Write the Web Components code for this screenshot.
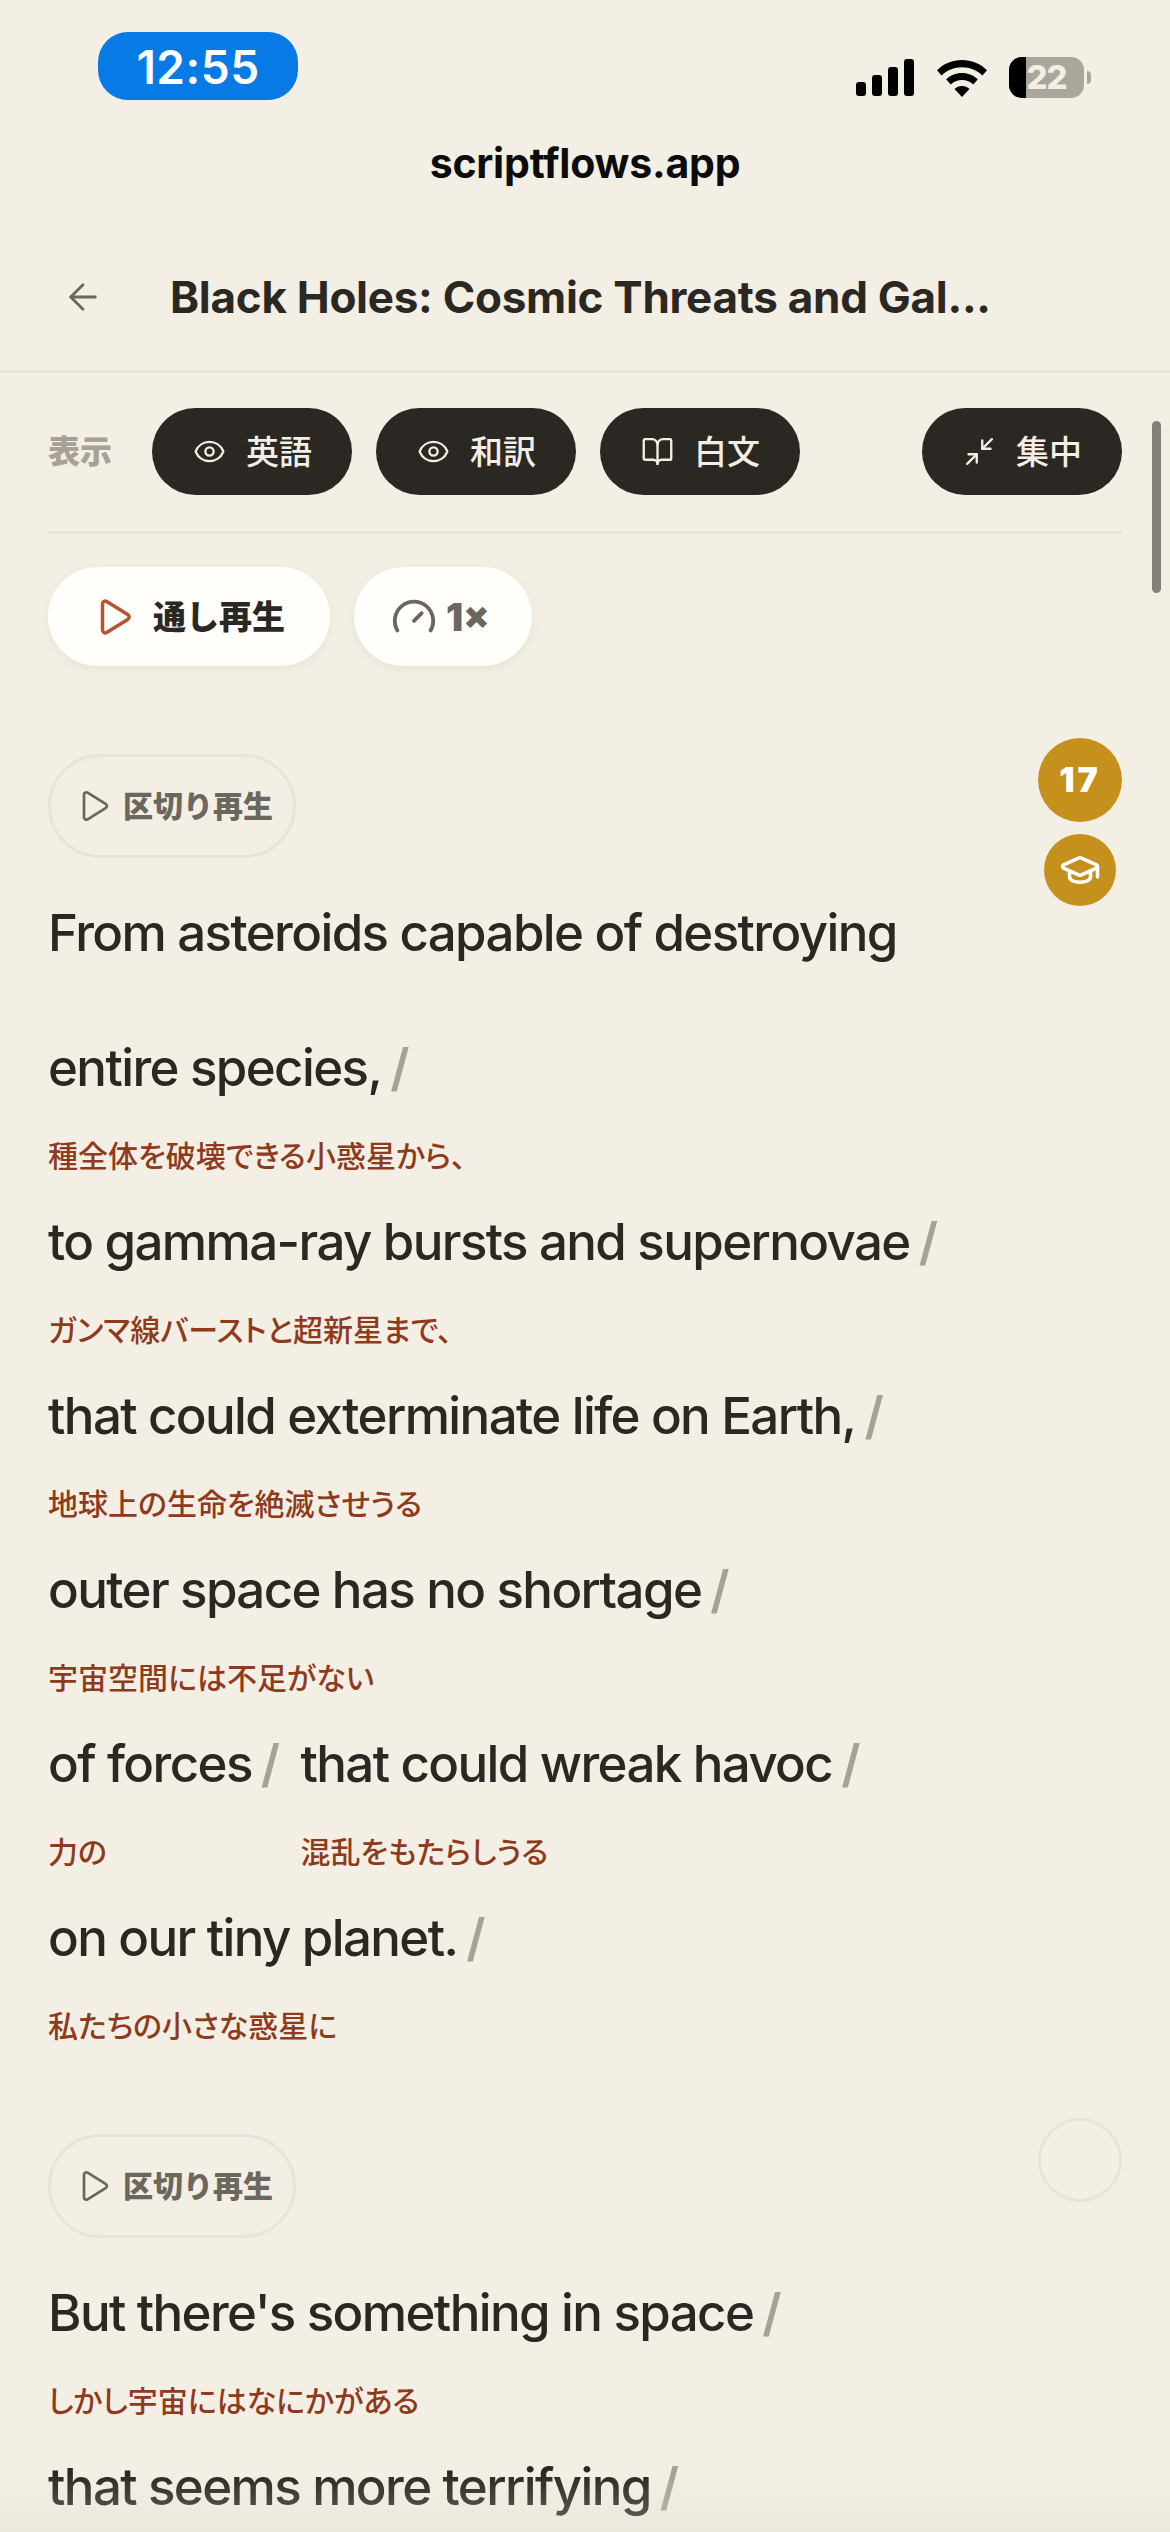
<!DOCTYPE html>
<html lang="ja">
<head>
<meta charset="utf-8">
<title>scriptflows</title>
<style>
  html, body { margin: 0; padding: 0; height: 2532px; overflow: hidden; background: #f3efe4; }
  body { position: relative; font-family: Inter, "Noto Sans CJK JP", sans-serif; color: #2b2824; }
</style>
</head>
<body>
<status-bar time="12:55" level="22"></status-bar>
<url-bar>scriptflows.app</url-bar>
<title-bar>Black Holes: Cosmic Threats and Gal...</title-bar>

<display-bar>
  <toggle-chip icon="eye">英語</toggle-chip>
  <toggle-chip icon="eye">和訳</toggle-chip>
  <toggle-chip icon="book">白文</toggle-chip>
  <toggle-chip icon="min" slot="end">集中</toggle-chip>
</display-bar>

<play-bar></play-bar>

<sentence-block count="17" active>
  <phrase-seg>From asteroids capable of destroying<br>entire species,<span slot="ja">種全体を破壊できる小惑星から、</span></phrase-seg>
  <phrase-seg>to gamma-ray bursts and supernovae<span slot="ja">ガンマ線バーストと超新星まで、</span></phrase-seg>
  <phrase-seg>that could exterminate life on Earth,<span slot="ja">地球上の生命を絶滅させうる</span></phrase-seg>
  <phrase-seg>outer space has no shortage<span slot="ja">宇宙空間には不足がない</span></phrase-seg>
  <phrase-seg>of forces<span slot="ja">力の</span></phrase-seg>
  <phrase-seg>that could wreak havoc<span slot="ja">混乱をもたらしうる</span></phrase-seg>
  <phrase-seg>on our tiny planet.<span slot="ja">私たちの小さな惑星に</span></phrase-seg>
</sentence-block>

<sentence-block>
  <phrase-seg>But there's something in space<span slot="ja">しかし宇宙にはなにかがある</span></phrase-seg>
  <phrase-seg>that seems more terrifying</phrase-seg>
</sentence-block>

<scroll-thumb></scroll-thumb>
<bottom-fade></bottom-fade>

<script>
// iconos de trazo, todos en caja de 24
const ICONS = {
  eye: '<path d="M2.06 12.35a1 1 0 0 1 0-.7 10.75 10.75 0 0 1 19.88 0 1 1 0 0 1 0 .7 10.75 10.75 0 0 1-19.88 0"/><circle cx="12" cy="12" r="3"/>',
  book: '<path d="M12 7v14"/><path d="M3 18a1 1 0 0 1-1-1V4a1 1 0 0 1 1-1h5a4 4 0 0 1 4 4 4 4 0 0 1 4-4h5a1 1 0 0 1 1 1v13a1 1 0 0 1-1 1h-6a3 3 0 0 0-3 3 3 3 0 0 0-3-3z"/>',
  min: '<path d="m14 10 7-7"/><path d="M20 10h-6V4"/><path d="m3 21 7-7"/><path d="M4 14h6v6"/>',
  play: '<path d="M6 4.5a1.6 1.6 0 0 1 2.4-1.4l12 7.5a1.6 1.6 0 0 1 0 2.8l-12 7.5A1.6 1.6 0 0 1 6 19.5z"/>',
  gauge: '<path d="m12 14 4-4"/><path d="M3.34 19a10 10 0 1 1 17.32 0"/>',
  cap: '<path d="M21.42 10.92a1 1 0 0 0-.02-1.84L12.83 5.18a2 2 0 0 0-1.66 0L2.6 9.08a1 1 0 0 0 0 1.83l8.57 3.91a2 2 0 0 0 1.66 0z"/><path d="M22 10v6"/><path d="M6 12.5V16a6 3 0 0 0 12 0v-3.5"/>',
  back: '<path d="m12 19-7-7 7-7"/><path d="M19 12H5"/>'
};

const icon = (name, size, sw) =>
  `<svg width="${size}" height="${size}" viewBox="0 0 24 24" fill="none" stroke="currentColor" stroke-width="${sw}" stroke-linecap="round" stroke-linejoin="round" style="display:block;flex:none">${ICONS[name]}</svg>`;

const JP = 'Inter, "Noto Sans CJK JP", sans-serif';

// base: shadow abierto + render()
class Base extends HTMLElement {
  constructor() {
    super();
    this.attachShadow({ mode: "open" });
  }
  connectedCallback() {
    this.shadowRoot.innerHTML = this.render();
  }
}

class StatusBar extends Base {
  render() {
    return `
    <style>
      :host { display: flex; justify-content: space-between; height: 110px; box-sizing: border-box; padding: 32px 79px 0 98px; }
      .time { width: 200px; height: 68px; border-radius: 30px; background: #077ae6; color: #fff; font: 600 46px/70px Inter, sans-serif; text-align: center; letter-spacing: .5px; }
      .right { display: flex; align-items: flex-start; padding-top: 25px; }
      .wifi { margin-left: 23px; margin-top: 3px; }
      .batt { position: relative; width: 75px; height: 41px; margin-left: 22px; border-radius: 13px; overflow: hidden; background: #aba69c; color: #f3efe4; font: 800 33px/41px Inter, sans-serif; text-align: center; }
      .batt i { position: absolute; left: 0; top: 0; bottom: 0; width: 17px; background: #000; }
      .batt span { position: relative; letter-spacing: -1px; }
      .nub { width: 4px; height: 13px; margin: 14px 0 0 3px; background: #aba69c; border-radius: 0 4px 4px 0; }
    </style>
    <div class="time">${this.getAttribute("time")}</div>
    <div class="right">
      <svg width="58" height="37" viewBox="0 0 58 37" fill="#000" style="margin-top:2px">
        <rect x="0" y="23" width="10" height="14" rx="3"/><rect x="16" y="16" width="10" height="21" rx="3"/>
        <rect x="32" y="8" width="10" height="29" rx="3"/><rect x="48" y="0" width="10" height="37" rx="3"/>
      </svg>
      <svg class="wifi" width="50" height="37" viewBox="0 0 50 37" fill="#000">
        <path d="M25 0c9.600 0 18.300 3.700 25 10.200l-4.600 5.200C40 10.200 32.900 7.200 25 7.200S10 10.200 4.600 15.400L0 10.200C6.700 3.700 15.400 0 25 0z"/>
        <path d="M25 13c6.200 0 11.700 2.400 15.900 6.300l-4.600 5.200C33.300 21.700 29.400 20 25 20s-8.300 1.700-11.300 4.500l-4.600-5.200C13.300 15.400 18.800 13 25 13z"/>
        <path d="M25 26c2.900 0 5.500 1.100 7.500 2.900L25 37l-7.500-8.100c2-1.800 4.600-2.900 7.500-2.900z"/>
      </svg>
      <div class="batt"><i></i><span>${this.getAttribute("level")}</span></div>
      <div class="nub"></div>
    </div>`;
  }
}

class UrlBar extends Base {
  render() {
    return `
    <style>
      :host { display: block; height: 106px; text-align: center; color: #0c0c0c; font: 700 41px/106px Inter, sans-serif; letter-spacing: -.2px; }
    </style>
    <slot></slot>`;
  }
}

class TitleBar extends Base {
  render() {
    return `
    <style>
      :host { display: flex; align-items: center; height: 157px; box-sizing: border-box; padding: 8px 0 0 62px; border-bottom: 3px solid #ebe4d6; }
      .back { color: #6b665e; margin-right: 66px; }
      .t { font: 700 44px/52px ${JP}; color: #2b2824; letter-spacing: -.27px; white-space: nowrap; }
    </style>
    <div class="back">${icon("back", 42, 1.6)}</div>
    <div class="t"><slot></slot></div>`;
  }
}

class DisplayBar extends Base {
  render() {
    return `
    <style>
      :host { display: flex; align-items: center; margin: 0 48px; padding: 35px 0 36px; border-bottom: 3px solid #ebe4d6; }
      .lbl { font: 900 32px/40px ${JP}; color: #a8a296; margin-right: 40px; }
      .chips { display: flex; gap: 24px; flex: 1; }
    </style>
    <div class="lbl">表示</div>
    <div class="chips"><slot></slot></div>
    <slot name="end"></slot>`;
  }
}

class ToggleChip extends Base {
  render() {
    return `
    <style>
      :host { display: flex; align-items: center; gap: 20px; height: 87px; box-sizing: border-box; padding: 0 40px 0 41px; border-radius: 44px; background: #2b2824; color: #f3efe4; font: 500 33px/40px ${JP}; }
    </style>
    ${icon(this.getAttribute("icon"), 33, 1.7)}<slot></slot>`;
  }
}

class PlayBar extends Base {
  render() {
    return `
    <style>
      :host { display: flex; gap: 24px; padding: 33px 48px 0; }
      .b { display: flex; align-items: center; height: 99px; box-sizing: border-box; border-radius: 50px; background: #fffefb; box-shadow: 0 3px 8px rgba(90,80,60,.07); }
      .all { width: 282px; padding-left: 44px; gap: 19px; color: #2b2824; font: 900 33px/40px ${JP}; }
      .all svg { color: #b4552f; }
      .spd { width: 178px; padding-left: 37px; gap: 9px; color: #6b665e; font: 900 38px/40px Inter, sans-serif; }
    </style>
    <div class="b all">${icon("play", 42, 2)}<span>通し再生</span></div>
    <div class="b spd">${icon("gauge", 46, 2)}<span>1×</span></div>`;
  }
}

class SentenceBlock extends Base {
  render() {
    const count = this.getAttribute("count");
    const rail = this.hasAttribute("active")
      ? `<div class="n">${count}</div><div class="c">${icon("cap", 42, 2)}</div>`
      : `<div class="o"></div>`;
    return `
    <style>
      :host { display: block; position: relative; margin: 88px 48px 0; }
      :host(:not([active])) { margin-top: 90px; }
      .seg { display: flex; align-items: center; gap: 12px; width: 248px; height: 104px; box-sizing: border-box; padding-left: 24px; border: 3px solid #ebe4d6; border-radius: 52px; color: #6b665e; font: 800 30px/40px ${JP}; margin-bottom: 7px; }
      .flow { display: flex; flex-wrap: wrap; column-gap: 22px; max-width: 920px; }
      .rail { position: absolute; top: -16px; right: 0; width: 84px; display: flex; flex-direction: column; align-items: center; gap: 12px; }
      .n, .c { display: flex; align-items: center; justify-content: center; border-radius: 50%; background: #c6901d; color: #fff; }
      .n { width: 84px; height: 84px; font: 900 34px/1 Inter, sans-serif; letter-spacing: 3px; }
      .c { width: 72px; height: 72px; }
      .o { width: 84px; height: 84px; box-sizing: border-box; border: 3px solid #ebe4d6; border-radius: 50%; }
    </style>
    <div class="seg">${icon("play", 36, 1.8)}<span>区切り再生</span></div>
    <div class="rail">${rail}</div>
    <div class="flow"><slot></slot></div>`;
  }
}

class PhraseSeg extends Base {
  render() {
    return `
    <style>
      :host { display: block; max-width: 100%; }
      .en { font: 550 51px/135px Inter, sans-serif; letter-spacing: -1.6px; color: #2b2824; }
      .sl { color: #a8a296; font-weight: 600; margin-left: 9px; }
      .ja { font: 500 30px/39px "Noto Sans CJK JP", sans-serif; font-feature-settings: "palt"; color: #8f3a1c; min-height: 39px; }
    </style>
    <div class="en"><slot></slot><span class="sl">/</span></div>
    <div class="ja"><slot name="ja"></slot></div>`;
  }
}

class ScrollThumb extends Base {
  render() {
    return `<style>:host { position: absolute; left: 1152px; top: 421px; width: 9px; height: 172px; border-radius: 5px; background: #82807a; }</style>`;
  }
}

class BottomFade extends Base {
  render() {
    return `<style>:host { position: absolute; left: 0; right: 0; bottom: 0; height: 60px; background: linear-gradient(rgba(225,220,208,0), rgba(225,220,208,.35)); pointer-events: none; }</style>`;
  }
}

customElements.define("status-bar", StatusBar);
customElements.define("url-bar", UrlBar);
customElements.define("title-bar", TitleBar);
customElements.define("display-bar", DisplayBar);
customElements.define("toggle-chip", ToggleChip);
customElements.define("play-bar", PlayBar);
customElements.define("sentence-block", SentenceBlock);
customElements.define("phrase-seg", PhraseSeg);
customElements.define("scroll-thumb", ScrollThumb);
customElements.define("bottom-fade", BottomFade);
</script>
</body>
</html>
